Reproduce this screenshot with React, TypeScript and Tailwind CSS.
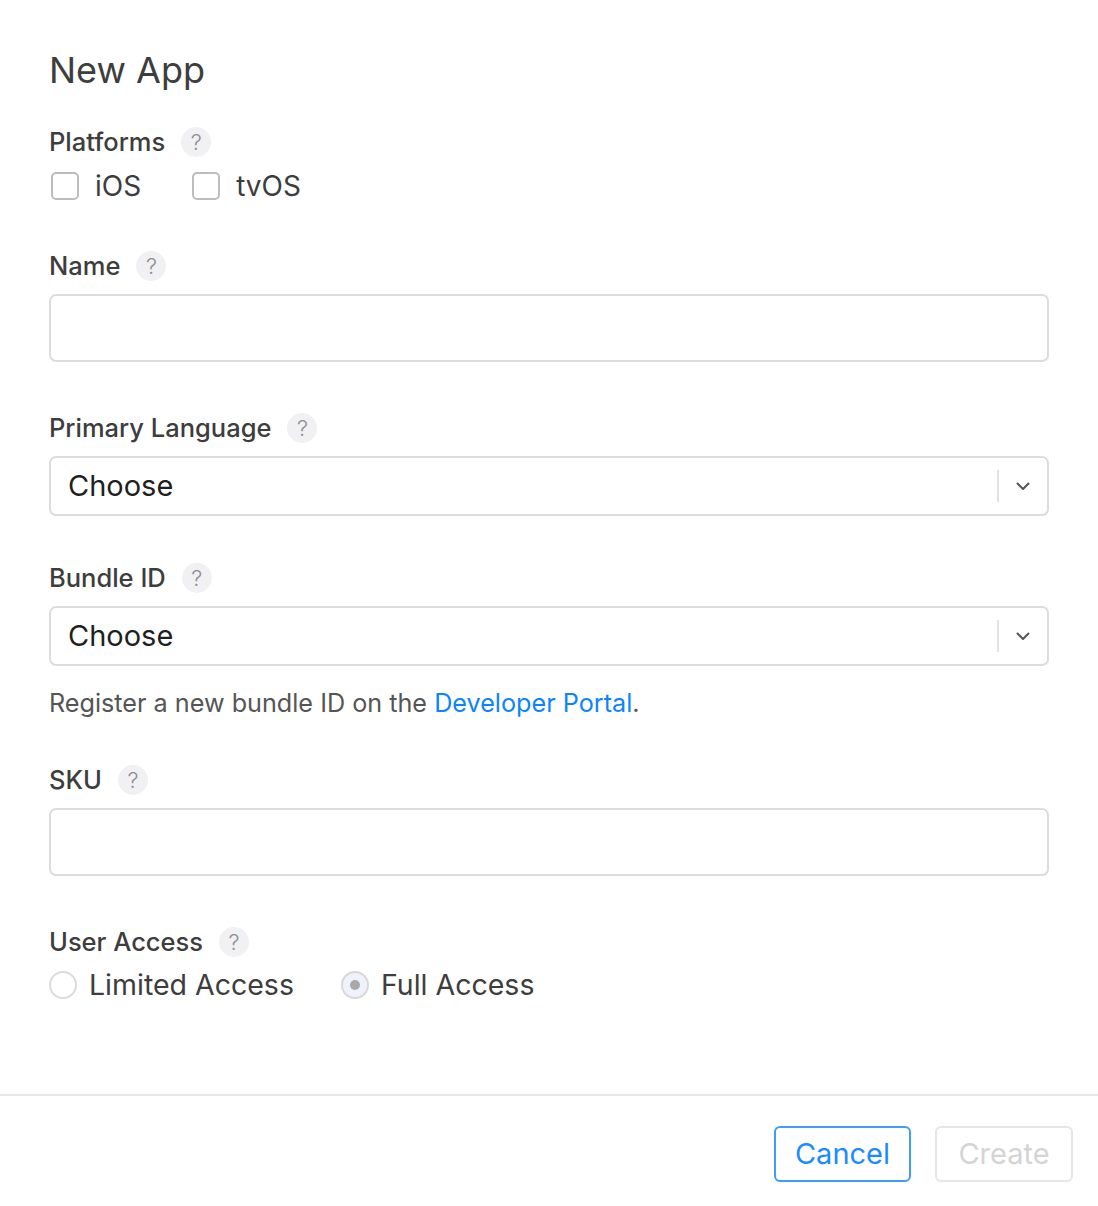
import React from "react";

function Help() {
  return (
    <span className="ml-4 inline-flex h-[30px] w-[30px] items-center justify-center rounded-full bg-[#f1f1f3] text-[22px] font-light leading-none text-[#8e8e93]">
      ?
    </span>
  );
}

function Label({ children }: { children: React.ReactNode }) {
  return (
    <div className="flex h-[32px] items-center">
      <span className="text-[25.5px] font-medium text-[#3d3d3d]">{children}</span>
      <Help />
    </div>
  );
}

function Checkbox({ label }: { label: string }) {
  return (
    <label className="flex items-center">
      <span className="h-[28px] w-[28px] rounded-[5px] border-2 border-[#bdbdbd] bg-white" />
      <span className="ml-[16px] text-[28px] text-[#3d3d3d]">{label}</span>
    </label>
  );
}

function Select() {
  return (
    <div className="flex h-[60px] items-center rounded-[7px] border-2 border-[#dcdcdc] bg-white">
      <span className="flex-1 pl-[17px] text-[29px] text-[#1f1f1f]">Choose</span>
      <span className="h-[32px] w-[2px] bg-[#e2e2e2]" />
      <span className="flex w-[48px] items-center justify-center">
        <svg width="14" height="9" viewBox="0 0 14 9" fill="none">
          <path d="M1.5 1.5L7 7L12.5 1.5" stroke="#555" strokeWidth="2" strokeLinecap="round" strokeLinejoin="round" />
        </svg>
      </span>
    </div>
  );
}

function Input() {
  return <div className="h-[68px] rounded-[7px] border-2 border-[#dcdcdc] bg-white" />;
}

function Radio({ label, checked }: { label: string; checked?: boolean }) {
  return (
    <label className="flex items-center">
      <span
        className={
          checked
            ? "flex h-[28px] w-[28px] items-center justify-center rounded-full border-2 border-[#d8d8d8] bg-[#eef3fb]"
            : "h-[28px] w-[28px] rounded-full border-2 border-[#dcdcdc] bg-white"
        }
      >
        {checked && <span className="h-[10px] w-[10px] rounded-full bg-[#a9a9a9]" />}
      </span>
      <span className="ml-[12px] text-[28.5px] text-[#3d3d3d]">{label}</span>
    </label>
  );
}

export default function App() {
  return (
    <div
      className="min-h-[1206px] w-full bg-white"
      style={{ fontFamily: "Inter, 'Noto Sans', sans-serif" }}
    >
      <div className="px-[49px] pt-[48px]">
        <h1 className="text-[36px] font-normal leading-[44px] text-[#3d3d3d]">New App</h1>

        <div className="mt-[34px]">
          <Label>Platforms</Label>
          <div className="mt-[7px] flex items-center gap-[51px] pl-[2px]">
            <Checkbox label="iOS" />
            <Checkbox label="tvOS" />
          </div>
        </div>

        <div className="mt-[43px]">
          <Label>Name</Label>
          <div className="mt-[12px]">
            <Input />
          </div>
        </div>

        <div className="mt-[50px]">
          <Label>Primary Language</Label>
          <div className="mt-[12px]">
            <Select />
          </div>
        </div>

        <div className="mt-[46px]">
          <Label>Bundle ID</Label>
          <div className="mt-[12px]">
            <Select />
          </div>
          <p className="mt-[20px] text-[25.2px] leading-[34px] text-[#555]">
            Register a new bundle ID on the <span className="text-[#0a84ff]">Developer Portal</span>.
          </p>
        </div>

        <div className="mt-[44px]">
          <Label>SKU</Label>
          <div className="mt-[12px]">
            <Input />
          </div>
        </div>

        <div className="mt-[50px]">
          <Label>User Access</Label>
          <div className="mt-[6px] flex items-center gap-[47px]">
            <Radio label="Limited Access" />
            <Radio label="Full Access" checked />
          </div>
        </div>
      </div>

      <div className="mt-[87px] border-t-2 border-[#e8e8e8]">
        <div className="flex justify-end gap-[24px] px-[25px] pt-[30px]">
          <button className="h-[56px] w-[137px] rounded-[6px] border-2 border-[#3f9bff] text-[29px] text-[#1a8cff]">
            Cancel
          </button>
          <button className="h-[56px] w-[138px] rounded-[6px] border-2 border-[#e6e6e6] text-[29px] text-[#d4d4d4]">
            Create
          </button>
        </div>
      </div>
    </div>
  );
}
